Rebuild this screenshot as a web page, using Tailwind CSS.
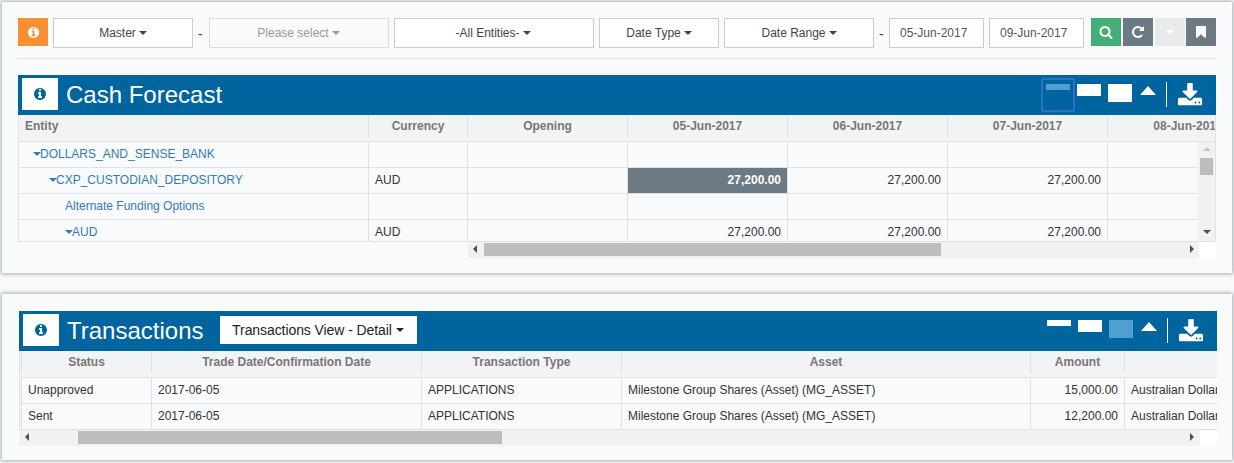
<!DOCTYPE html>
<html>
<head>
<meta charset="utf-8">
<script src="https://cdn.jsdelivr.net/npm/@tailwindcss/browser@4"></script>
</head>
<body class="m-0 h-[463px] w-[1234px] overflow-hidden bg-[#f9fafc] font-['Liberation_Sans',Arial,sans-serif] text-[12px] text-[#333]">
<div class="flex flex-col gap-[21px] px-[2px] pt-[2px]">

<section class="h-[271px] w-[1230px] bg-[#f9fafc] px-[16px] pt-[16px] shadow-[0_0_4px_1px_rgba(100,115,130,0.6)]">
  <div class="flex h-[30px] items-start">
    <button class="flex h-[28px] w-[30px] items-center justify-center bg-[#f89033]">
      <svg width="13" height="13" viewBox="0 0 1792 1792" fill="#fff"><path d="M1152 1376v-160q0-14-9-23t-23-9h-96v-512q0-14-9-23t-23-9h-320q-14 0-23 9t-9 23v160q0 14 9 23t23 9h96v320h-96q-14 0-23 9t-9 23v160q0 14 9 23t23 9h448q14 0 23-9t9-23zm-128-896v-160q0-14-9-23t-23-9h-192q-14 0-23 9t-9 23v160q0 14 9 23t23 9h192q14 0 23-9t9-23zm640 416q0 209-103 385.5t-279.5 279.5-385.5 103-385.5-103-279.5-279.5-103-385.5 103-385.5 279.5-279.5 385.5-103 385.5 103 279.5 279.5 103 385.5z"/></svg>
    </button>
    <button class="ml-[5px] flex h-[30px] w-[140px] items-center justify-center gap-[3px] border border-[#ccc] bg-white text-[#444]">Master <i class="h-0 w-0 border-x-[4px] border-t-[4px] border-x-transparent border-t-[#444]"></i></button>
    <span class="ml-[5px] mt-[6px] w-[11px] text-[14px] text-[#444]">-</span>
    <button class="flex h-[30px] w-[180px] items-center justify-center gap-[3px] border border-[#ddd] pr-[1px] text-[#999]">Please select <i class="h-0 w-0 border-x-[4px] border-t-[4px] border-x-transparent border-t-[#999]"></i></button>
    <button class="ml-[5px] flex h-[30px] w-[200px] items-center justify-center gap-[3px] border border-[#ccc] bg-white pr-[2px] text-[#444]">-All Entities- <i class="h-0 w-0 border-x-[4px] border-t-[4px] border-x-transparent border-t-[#444]"></i></button>
    <button class="ml-[5px] flex h-[30px] w-[120px] items-center justify-center gap-[3px] border border-[#ccc] bg-white text-[#444]">Date Type <i class="h-0 w-0 border-x-[4px] border-t-[4px] border-x-transparent border-t-[#444]"></i></button>
    <button class="ml-[5px] flex h-[30px] w-[150px] items-center justify-center gap-[3px] border border-[#ccc] bg-white text-[#444]">Date Range <i class="h-0 w-0 border-x-[4px] border-t-[4px] border-x-transparent border-t-[#444]"></i></button>
    <span class="ml-[5px] mt-[6px] w-[10px] text-[14px] text-[#444]">-</span>
    <div class="flex h-[30px] w-[95px] items-center border border-[#ccc] bg-white pl-[10px] text-[#555]">05-Jun-2017</div>
    <div class="ml-[5px] flex h-[30px] w-[95px] items-center border border-[#ccc] bg-white pl-[10px] text-[#555]">09-Jun-2017</div>
    <button class="ml-[7px] flex h-[28px] w-[30px] items-center justify-center bg-[#43ae76]">
      <svg width="14" height="14" viewBox="0 0 1792 1792" fill="#fff"><path d="M1216 832q0-185-131.5-316.5t-316.5-131.5-316.5 131.5-131.5 316.5 131.5 316.5 316.5 131.5 316.5-131.5 131.5-316.5zm512 832q0 52-38 90t-90 38q-54 0-90-38l-343-342q-179 124-399 124-143 0-273.5-55.5t-225-150-150-225-55.5-273.5 55.5-273.5 150-225 225-150 273.5-55.5 273.5 55.5 225 150 150 225 55.5 273.5q0 220-124 399l343 343q37 37 37 90z"/></svg>
    </button>
    <button class="ml-[2px] flex h-[28px] w-[30px] items-center justify-center bg-[#6c7a86]">
      <svg width="14" height="14" viewBox="0 0 1792 1792" fill="#fff"><path d="M1664 256v448q0 26-19 45t-45 19h-448q-42 0-59-40-17-39 14-69l138-138q-148-137-349-137-104 0-198.5 40.5t-163.5 109.5-109.5 163.5-40.5 198.5 40.5 198.5 109.5 163.5 163.5 109.5 198.5 40.5q119 0 225-52t179-147q7-10 23-12 15 0 25 9l137 138q9 8 9.5 20.5t-7.5 22.5q-109 132-264 204.5t-327 72.5q-156 0-298-61t-245-164-164-245-61-298 61-298 164-245 245-164 298-61q147 0 284.5 55.5t244.5 156.5l130-129q29-31 70-14 39 17 39 59z"/></svg>
    </button>
    <button class="ml-[2px] flex h-[28px] w-[30px] items-center justify-center bg-[#e9ebeb]"><i class="h-0 w-0 border-x-[4px] border-t-[4px] border-x-transparent border-t-white"></i></button>
    <button class="ml-px flex h-[28px] w-[30px] items-center justify-center bg-[#6c7a86]">
      <svg width="14" height="14" viewBox="0 0 1792 1792" fill="#fff"><path d="M1420 128q23 0 44 9 33 13 52.5 41t19.5 62v1289q0 34-19.5 62t-52.5 41q-19 8-44 8-48 0-83-32l-441-424-441 424q-36 33-83 33-23 0-44-9-33-13-52.5-41t-19.5-62v-1289q0-34 19.5-62t52.5-41q21-9 44-9h1048z"/></svg>
    </button>
  </div>
  <div class="mt-[10px] h-px w-[1198px] bg-[#dfe1e4]"></div>

  <div class="mt-[16px] w-[1198px]">
    <div class="flex h-[40px] items-center bg-[#00659f] pb-[2px] pl-[4px]">
      <div class="flex h-[32px] w-[36px] items-center justify-center bg-white">
        <svg width="14" height="14" viewBox="0 0 1792 1792" fill="#00659f"><path d="M1152 1376v-160q0-14-9-23t-23-9h-96v-512q0-14-9-23t-23-9h-320q-14 0-23 9t-9 23v160q0 14 9 23t23 9h96v320h-96q-14 0-23 9t-9 23v160q0 14 9 23t23 9h448q14 0 23-9t9-23zm-128-896v-160q0-14-9-23t-23-9h-192q-14 0-23 9t-9 23v160q0 14 9 23t23 9h192q14 0 23-9t9-23zm640 416q0 209-103 385.5t-279.5 279.5-385.5 103-385.5-103-279.5-279.5-103-385.5 103-385.5 279.5-279.5 385.5-103 385.5 103 279.5 279.5 103 385.5z"/></svg>
      </div>
      <h2 class="ml-[8px] mt-[2px] text-[24px] leading-[32px] text-white">Cash Forecast</h2>
      <div class="ml-auto mb-[-2px] flex h-[40px] items-start">
        <div class="mt-[3px] h-[34px] w-[34px] rounded-[2px] border-2 border-[#2a72c8] px-[3px] pt-[4px]"><div class="h-[6px] w-[24px] bg-[#4f9fd1]"></div></div>
        <div class="ml-[2px] mt-[9px] h-[12px] w-[24px] bg-white"></div>
        <div class="ml-[7px] mt-[9px] h-[18px] w-[24px] bg-white"></div>
        <i class="ml-[8px] mt-[11px] h-0 w-0 border-x-[8px] border-b-[9px] border-x-transparent border-b-white"></i>
        <div class="ml-[10px] mt-[7px] h-[25px] w-px bg-white"></div>
        <svg class="ml-[10px] mr-[13px] mt-[8px]" width="26" height="26" viewBox="0 0 1792 1792" fill="#fff"><path d="M1344 1344q0-26-19-45t-45-19-45 19-19 45 19 45 45 19 45-19 19-45zm256 0q0-26-19-45t-45-19-45 19-19 45 19 45 45 19 45-19 19-45zm128-224v320q0 40-28 68t-68 28h-1472q-40 0-68-28t-28-68v-320q0-40 28-68t68-28h465l135 136q58 56 136 56t136-56l136-136h464q40 0 68 28t28 68zm-325-569q17 41-14 70l-448 448q-18 19-45 19t-45-19l-448-448q-31-29-14-70 17-39 59-39h256v-448q0-26 19-45t45-19h256q26 0 45 19t19 45v448h256q42 0 59 39z"/></svg>
      </div>
    </div>

    <div class="flex h-[27px] overflow-hidden border-x border-b border-[#dfe1e4] bg-[#f2f3f5] font-bold text-[#777]">
      <div class="flex h-[22px] w-[350px] shrink-0 items-center border-r border-[#dfe1e4] pl-[6px]">Entity</div>
      <div class="flex h-[22px] w-[99px] shrink-0 items-center justify-center border-r border-[#dfe1e4]">Currency</div>
      <div class="flex h-[22px] w-[160px] shrink-0 items-center justify-center border-r border-[#dfe1e4]">Opening</div>
      <div class="flex h-[22px] w-[160px] shrink-0 items-center justify-center border-r border-[#dfe1e4]">05-Jun-2017</div>
      <div class="flex h-[22px] w-[160px] shrink-0 items-center justify-center border-r border-[#dfe1e4]">06-Jun-2017</div>
      <div class="flex h-[22px] w-[160px] shrink-0 items-center justify-center border-r border-[#dfe1e4]">07-Jun-2017</div>
      <div class="flex h-[22px] w-[160px] shrink-0 items-center justify-center">08-Jun-2017</div>
    </div>

    <div class="flex h-[100px] border-b border-l border-[#dfe1e4]">
      <div class="w-[1180px] overflow-hidden">
        <div class="flex h-[26px] w-[1300px] border-b border-[#dfe1e4]">
          <div class="flex w-[350px] shrink-0 items-center border-r border-[#dfe1e4] pb-[2px] pl-[14px] text-[#337ab7]"><i class="mr-[-1px] h-0 w-0 border-x-[4px] border-t-[4px] border-x-transparent border-t-[#337ab7]"></i>DOLLARS_AND_SENSE_BANK</div>
          <div class="w-[99px] shrink-0 border-r border-[#dfe1e4]"></div>
          <div class="w-[160px] shrink-0 border-r border-[#dfe1e4]"></div>
          <div class="w-[160px] shrink-0 border-r border-[#dfe1e4]"></div>
          <div class="w-[160px] shrink-0 border-r border-[#dfe1e4]"></div>
          <div class="w-[160px] shrink-0 border-r border-[#dfe1e4]"></div>
        </div>
        <div class="flex h-[26px] w-[1300px] border-b border-[#dfe1e4]">
          <div class="flex w-[350px] shrink-0 items-center border-r border-[#dfe1e4] pb-[2px] pl-[30px] text-[#337ab7]"><i class="mr-[-1px] h-0 w-0 border-x-[4px] border-t-[4px] border-x-transparent border-t-[#337ab7]"></i>CXP_CUSTODIAN_DEPOSITORY</div>
          <div class="flex w-[99px] shrink-0 items-center border-r border-[#dfe1e4] pb-[2px] pl-[6px]">AUD</div>
          <div class="w-[160px] shrink-0 border-r border-[#dfe1e4]"></div>
          <div class="flex w-[160px] shrink-0 items-center justify-end border-r border-[#dfe1e4] bg-[#6c7a86] pb-[2px] pr-[6px] font-bold text-white">27,200.00</div>
          <div class="flex w-[160px] shrink-0 items-center justify-end border-r border-[#dfe1e4] pb-[2px] pr-[6px]">27,200.00</div>
          <div class="flex w-[160px] shrink-0 items-center justify-end border-r border-[#dfe1e4] pb-[2px] pr-[6px]">27,200.00</div>
        </div>
        <div class="flex h-[26px] w-[1300px] border-b border-[#dfe1e4]">
          <div class="flex w-[350px] shrink-0 items-center border-r border-[#dfe1e4] pb-[2px] pl-[46px] text-[#337ab7]">Alternate Funding Options</div>
          <div class="w-[99px] shrink-0 border-r border-[#dfe1e4]"></div>
          <div class="w-[160px] shrink-0 border-r border-[#dfe1e4]"></div>
          <div class="w-[160px] shrink-0 border-r border-[#dfe1e4]"></div>
          <div class="w-[160px] shrink-0 border-r border-[#dfe1e4]"></div>
          <div class="w-[160px] shrink-0 border-r border-[#dfe1e4]"></div>
        </div>
        <div class="flex h-[26px] w-[1300px]">
          <div class="flex w-[350px] shrink-0 items-center border-r border-[#dfe1e4] pb-[2px] pl-[46px] text-[#337ab7]"><i class="mr-[-1px] h-0 w-0 border-x-[4px] border-t-[4px] border-x-transparent border-t-[#337ab7]"></i>AUD</div>
          <div class="flex w-[99px] shrink-0 items-center border-r border-[#dfe1e4] pb-[2px] pl-[6px]">AUD</div>
          <div class="w-[160px] shrink-0 border-r border-[#dfe1e4]"></div>
          <div class="flex w-[160px] shrink-0 items-center justify-end border-r border-[#dfe1e4] pb-[2px] pr-[6px]">27,200.00</div>
          <div class="flex w-[160px] shrink-0 items-center justify-end border-r border-[#dfe1e4] pb-[2px] pr-[6px]">27,200.00</div>
          <div class="flex w-[160px] shrink-0 items-center justify-end border-r border-[#dfe1e4] pb-[2px] pr-[6px]">27,200.00</div>
        </div>
      </div>
      <div class="flex w-[17px] flex-col items-center bg-[#f1f1f1] px-[2px] pt-[5px]">
        <i class="h-0 w-0 border-x-[4px] border-b-[4px] border-x-transparent border-b-[#c4c4c4]"></i>
        <div class="mt-[7px] h-[17px] w-[13px] bg-[#bdbdbd]"></div>
        <i class="mt-auto mb-[7px] h-0 w-0 border-x-[4px] border-t-[4px] border-x-transparent border-t-[#505050]"></i>
      </div>
      <div class="w-px bg-[#dfe1e4]"></div>
    </div>
    <div class="ml-[450px] flex h-[16px] w-[748px]">
      <div class="flex w-[731px] items-center bg-[#f1f1f1] px-[5px] pb-[2px]">
        <i class="h-0 w-0 border-y-[4px] border-r-[4px] border-y-transparent border-r-[#505050]"></i>
        <div class="ml-[7px] h-[13px] w-[457px] bg-[#bdbdbd]"></div>
        <i class="ml-auto h-0 w-0 border-y-[4px] border-l-[4px] border-y-transparent border-l-[#505050]"></i>
      </div>
      <div class="w-[17px] bg-white"></div>
    </div>
  </div>
</section>

<section class="h-[166px] w-[1230px] bg-[#f9fafc] pl-[17px] pt-[17px] shadow-[0_0_4px_1px_rgba(100,115,130,0.6)]">
  <div class="w-[1198px]">
    <div class="flex h-[40px] items-center bg-[#00659f] pb-[2px] pl-[4px]">
      <div class="flex h-[32px] w-[36px] items-center justify-center bg-white">
        <svg width="14" height="14" viewBox="0 0 1792 1792" fill="#00659f"><path d="M1152 1376v-160q0-14-9-23t-23-9h-96v-512q0-14-9-23t-23-9h-320q-14 0-23 9t-9 23v160q0 14 9 23t23 9h96v320h-96q-14 0-23 9t-9 23v160q0 14 9 23t23 9h448q14 0 23-9t9-23zm-128-896v-160q0-14-9-23t-23-9h-192q-14 0-23 9t-9 23v160q0 14 9 23t23 9h192q14 0 23-9t9-23zm640 416q0 209-103 385.5t-279.5 279.5-385.5 103-385.5-103-279.5-279.5-103-385.5 103-385.5 279.5-279.5 385.5-103 385.5 103 279.5 279.5 103 385.5z"/></svg>
      </div>
      <h2 class="ml-[8px] mt-[2px] text-[24px] leading-[32px] text-white">Transactions</h2>
      <button class="ml-[16px] flex h-[28px] w-[197px] items-center justify-center gap-[3px] bg-white text-[14px] tracking-[-0.08px] text-[#222]">Transactions View - Detail <i class="ml-px h-0 w-0 border-x-[4px] border-t-[4px] border-x-transparent border-t-[#222]"></i></button>
      <div class="ml-auto mb-[-2px] flex h-[40px] items-start">
        <div class="mt-[9px] h-[6px] w-[24px] bg-white"></div>
        <div class="ml-[7px] mt-[9px] h-[12px] w-[24px] bg-white"></div>
        <div class="ml-[7px] mt-[9px] h-[18px] w-[24px] bg-[#4f9fd1]"></div>
        <i class="ml-[8px] mt-[11px] h-0 w-0 border-x-[8px] border-b-[9px] border-x-transparent border-b-white"></i>
        <div class="ml-[10px] mt-[7px] h-[25px] w-px bg-white"></div>
        <svg class="ml-[10px] mr-[13px] mt-[8px]" width="26" height="26" viewBox="0 0 1792 1792" fill="#fff"><path d="M1344 1344q0-26-19-45t-45-19-45 19-19 45 19 45 45 19 45-19 19-45zm256 0q0-26-19-45t-45-19-45 19-19 45 19 45 45 19 45-19 19-45zm128-224v320q0 40-28 68t-68 28h-1472q-40 0-68-28t-28-68v-320q0-40 28-68t68-28h465l135 136q58 56 136 56t136-56l136-136h464q40 0 68 28t28 68zm-325-569q17 41-14 70l-448 448q-18 19-45 19t-45-19l-448-448q-31-29-14-70 17-39 59-39h256v-448q0-26 19-45t45-19h256q26 0 45 19t19 45v448h256q42 0 59 39z"/></svg>
      </div>
    </div>
    <div class="flex h-[27px] overflow-hidden border-b border-l border-[#dfe1e4] bg-[#f2f3f5] pl-px font-bold text-[#777]">
      <div class="flex h-[22px] w-[131px] shrink-0 items-center justify-center border-x border-[#dfe1e4]">Status</div>
      <div class="flex h-[22px] w-[270px] shrink-0 items-center justify-center border-r border-[#dfe1e4]">Trade Date/Confirmation Date</div>
      <div class="flex h-[22px] w-[200px] shrink-0 items-center justify-center border-r border-[#dfe1e4]">Transaction Type</div>
      <div class="flex h-[22px] w-[409px] shrink-0 items-center justify-center border-r border-[#dfe1e4]">Asset</div>
      <div class="flex h-[22px] w-[94px] shrink-0 items-center justify-center border-r border-[#dfe1e4]">Amount</div>
    </div>
    <div class="flex h-[26px] overflow-hidden border-b border-l border-[#dfe1e4] pl-px">
      <div class="flex w-[131px] shrink-0 items-center border-x border-[#dfe1e4] pb-[2px] pl-[6px]">Unapproved</div>
      <div class="flex w-[270px] shrink-0 items-center border-r border-[#dfe1e4] pb-[2px] pl-[6px]">2017-06-05</div>
      <div class="flex w-[200px] shrink-0 items-center border-r border-[#dfe1e4] pb-[2px] pl-[6px]">APPLICATIONS</div>
      <div class="flex w-[409px] shrink-0 items-center border-r border-[#dfe1e4] pb-[2px] pl-[6px]">Milestone Group Shares (Asset) (MG_ASSET)</div>
      <div class="flex w-[94px] shrink-0 items-center justify-end border-r border-[#dfe1e4] pb-[2px] pr-[6px]">15,000.00</div>
      <div class="flex w-[140px] shrink-0 items-center pb-[2px] pl-[6px]">Australian Dollar</div>
    </div>
    <div class="flex h-[26px] overflow-hidden border-b border-l border-[#dfe1e4] pl-px">
      <div class="flex w-[131px] shrink-0 items-center border-x border-[#dfe1e4] pb-[2px] pl-[6px]">Sent</div>
      <div class="flex w-[270px] shrink-0 items-center border-r border-[#dfe1e4] pb-[2px] pl-[6px]">2017-06-05</div>
      <div class="flex w-[200px] shrink-0 items-center border-r border-[#dfe1e4] pb-[2px] pl-[6px]">APPLICATIONS</div>
      <div class="flex w-[409px] shrink-0 items-center border-r border-[#dfe1e4] pb-[2px] pl-[6px]">Milestone Group Shares (Asset) (MG_ASSET)</div>
      <div class="flex w-[94px] shrink-0 items-center justify-end border-r border-[#dfe1e4] pb-[2px] pr-[6px]">12,200.00</div>
      <div class="flex w-[140px] shrink-0 items-center pb-[2px] pl-[6px]">Australian Dollar</div>
    </div>
    <div class="flex h-[16px] w-[1198px]">
      <div class="flex w-[1181px] items-center bg-[#f1f1f1] px-[6px] pb-[2px]">
        <i class="h-0 w-0 border-y-[4px] border-r-[4px] border-y-transparent border-r-[#505050]"></i>
        <div class="ml-[49px] h-[13px] w-[424px] bg-[#bdbdbd]"></div>
        <i class="ml-auto h-0 w-0 border-y-[4px] border-l-[4px] border-y-transparent border-l-[#505050]"></i>
      </div>
      <div class="w-[17px] bg-white"></div>
    </div>
  </div>
</section>
</div>
</body>
</html>
